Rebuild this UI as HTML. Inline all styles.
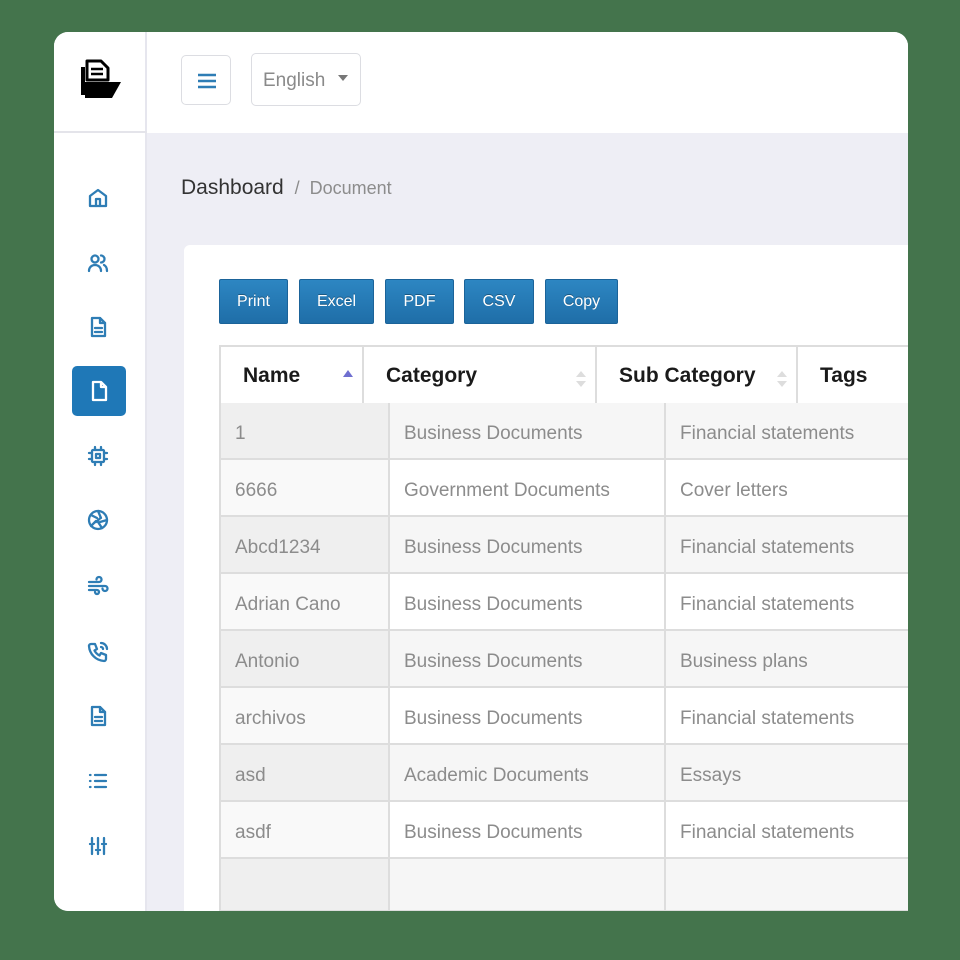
<!DOCTYPE html>
<html><head><meta charset="utf-8">
<style>
*{margin:0;padding:0;box-sizing:border-box}
body{width:960px;height:960px;background:#44744c;position:relative;overflow:hidden;font-family:"Liberation Sans",sans-serif}
.card{position:absolute;left:54px;top:32px;width:854px;height:879px;background:#eeeef5;border-radius:14px;overflow:hidden}
.side{position:absolute;left:0;top:0;width:93px;height:879px;background:#fff;border-right:2px solid #e6e6ee}
.logo{position:absolute;left:0;top:0;width:93px;height:101px;border-bottom:2px solid #e4e4ea}
.head{position:absolute;left:93px;top:0;right:0;height:101px;background:#fff}
.ic{position:absolute;left:32px;width:24px;height:24px}
.ic svg{width:24px;height:24px;fill:none;stroke:#2e7db5;stroke-width:2.3;stroke-linecap:round;stroke-linejoin:round}
.btnm{position:absolute;left:127px;top:23px;width:50px;height:50px;border:1px solid #dcdde2;border-radius:5px;background:#fff}
.lang{position:absolute;left:197px;top:21px;width:110px;height:53px;border:1px solid #dcdde2;border-radius:5px;background:#fff;color:#8a8a8a;font-size:19px;padding:16px 0 0 11px}
.lang:after{content:"";position:absolute;right:12px;top:21px;border-left:5px solid transparent;border-right:5px solid transparent;border-top:6px solid #777}
.bc{position:absolute;left:127px;top:144px;font-size:21px;color:#333}
.bc span{color:#8c8c8c;font-size:18px}
.panel{position:absolute;left:130px;top:213px;width:740px;height:700px;background:#fff;border-radius:6px}
.b{position:absolute;top:247px;height:45px;background:linear-gradient(#2d86c2,#1f6ea8);color:#fff;font-size:16px;text-align:center;line-height:43px;border-radius:2px;border:1px solid #1b6399;text-shadow:0 -1px 0 rgba(0,0,0,.3)}
.th{position:absolute;top:313px;height:61px;background:#fff;border:2px solid #ddd;font-weight:bold;font-size:21px;color:#1a1a1a;padding:17px 0 0 22px}
.cell{position:absolute;height:57px;border-left:2px solid #ddd;border-bottom:2px solid #ddd;font-size:19px;color:#8c8c8c;padding:20px 0 0 14px;white-space:nowrap;overflow:hidden}
.sort{position:absolute;top:22px;width:10px;height:20px}
</style></head><body>
<div class="card">
 <div class="side">
  <div class="logo">
   <svg style="position:absolute;left:24px;top:26px" width="44" height="42" viewBox="0 0 44 42">
    <path d="M3 9h4v28H3z" fill="#000"/>
    <path d="M9 3h14l7 7v12H9z" fill="#fff" stroke="#000" stroke-width="3" stroke-linejoin="round"/>
    <path d="M13 11h12M13 16h12" stroke="#000" stroke-width="2.5"/>
    <path d="M7 24h36l-9 16H7z" fill="#000"/>
   </svg>
  </div>
  <div class="ic" style="top:154px"><svg viewBox="0 0 24 24"><path d="M4 10l8-6 8 6v10H4z"/><path d="M10 20v-7h4v7"/></svg></div>
  <div class="ic" style="top:219px"><svg viewBox="0 0 24 24"><circle cx="9" cy="8" r="3.5"/><path d="M3 20c0-4 3-6 6-6s6 2 6 6"/><path d="M15 4.5a3.5 3.5 0 0 1 0 7M18 14c2 1 3 3 3 6"/></svg></div>
  <div class="ic" style="top:283px"><svg viewBox="0 0 24 24"><path d="M6 3h8l5 5v13H6z"/><path d="M14 3v5h5M9 13h7M9 17h7"/></svg></div>
  <div style="position:absolute;left:18px;top:334px;width:54px;height:50px;background:#1f78b7;border-radius:5px"><svg style="position:absolute;left:15px;top:13px" width="24" height="24" viewBox="0 0 24 24" fill="none" stroke="#fff" stroke-width="2.3" stroke-linejoin="round"><path d="M6 3h8l5 5v13H6z"/><path d="M14 3v5h5"/></svg></div>
  <div class="ic" style="top:412px"><svg viewBox="0 0 24 24"><rect x="6" y="6" width="12" height="12" rx="1"/><rect x="10" y="10" width="4" height="4"/><path d="M9 3v3M15 3v3M9 18v3M15 18v3M3 9h3M3 15h3M18 9h3M18 15h3"/></svg></div>
  <div class="ic" style="top:476px"><svg viewBox="0 0 24 24"><circle cx="12" cy="12" r="9"/><path d="M12 3l3 7M21 12l-7 2M16 20l-4-6M5 18l5-5M5 7l6 3M14.5 10L10 14"/></svg></div>
  <div class="ic" style="top:542px"><svg viewBox="0 0 24 24"><path d="M3 8h10a2.5 2.5 0 1 0-2.5-2.5M3 12h16a2.5 2.5 0 1 1-2.5 2.5M3 16h8a2 2 0 1 1-2 2"/></svg></div>
  <div class="ic" style="top:608px"><svg viewBox="0 0 24 24"><path d="M5 4h4l2 5-2.5 1.5a11 11 0 0 0 5 5L15 13l5 2v4a2 2 0 0 1-2 2A16 16 0 0 1 3 6a2 2 0 0 1 2-2"/><path d="M15 7a2 2 0 0 1 2 2M15 3a6 6 0 0 1 6 6"/></svg></div>
  <div class="ic" style="top:672px"><svg viewBox="0 0 24 24"><path d="M6 3h8l5 5v13H6z"/><path d="M14 3v5h5M9 13h7M9 17h7"/></svg></div>
  <div class="ic" style="top:737px"><svg viewBox="0 0 24 24"><path d="M9 6h11M9 12h11M9 18h11M4 6h.5M4 12h.5M4 18h.5"/></svg></div>
  <div class="ic" style="top:802px"><svg viewBox="0 0 24 24"><path d="M6 4v4M6 12v8M12 4v10M12 18v2M18 4v4M18 12v8M4 10h4M10 16h4M16 10h4"/></svg></div>
 </div>
 <div class="head">
  <div class="btnm" style="left:34px"><svg style="position:absolute;left:14px;top:16px" width="22" height="18" viewBox="0 0 22 18" stroke="#2e7db5" stroke-width="2.5"><path d="M2 3h18M2 9h18M2 15h18"/></svg></div>
  <div class="lang" style="left:104px">English</div>
 </div>
 <div class="bc">Dashboard <span>&nbsp;/&nbsp; Document</span></div>
 <div class="panel"></div>
 <div class="b" style="left:165px;width:69px">Print</div>
 <div class="b" style="left:245px;width:75px">Excel</div>
 <div class="b" style="left:331px;width:69px">PDF</div>
 <div class="b" style="left:410px;width:70px">CSV</div>
 <div class="b" style="left:491px;width:73px">Copy</div>

 <div class="th" style="left:165px;width:145px">Name<svg class="sort" style="left:122px" viewBox="0 0 10 20"><path d="M0 8l5-7 5 7z" fill="#6f6fd0"/></svg></div>
 <div class="th" style="left:308px;width:235px">Category<svg class="sort" style="left:212px" viewBox="0 0 10 20"><path d="M0 8l5-6 5 6zM0 12l5 6 5-6z" fill="#ddd"/></svg></div>
 <div class="th" style="left:541px;width:203px">Sub Category<svg class="sort" style="left:180px" viewBox="0 0 10 20"><path d="M0 8l5-6 5 6zM0 12l5 6 5-6z" fill="#ddd"/></svg></div>
 <div class="th" style="left:742px;width:120px;border-right:none">Tags</div>
</div>
<div style="position:absolute;left:219px;top:403px;width:690px;height:509px">
 <div class="cell" style="left:0;top:0;width:171px;background:#efefef">1</div><div class="cell" style="left:169px;top:0;width:278px;background:#f6f6f6">Business Documents</div><div class="cell" style="left:445px;top:0;width:245px;background:#f6f6f6">Financial statements</div>
 <div class="cell" style="left:0;top:57px;width:171px;background:#f9f9f9">6666</div><div class="cell" style="left:169px;top:57px;width:278px;background:#fff">Government Documents</div><div class="cell" style="left:445px;top:57px;width:245px;background:#fff">Cover letters</div>
 <div class="cell" style="left:0;top:114px;width:171px;background:#efefef">Abcd1234</div><div class="cell" style="left:169px;top:114px;width:278px;background:#f6f6f6">Business Documents</div><div class="cell" style="left:445px;top:114px;width:245px;background:#f6f6f6">Financial statements</div>
 <div class="cell" style="left:0;top:171px;width:171px;background:#f9f9f9">Adrian Cano</div><div class="cell" style="left:169px;top:171px;width:278px;background:#fff">Business Documents</div><div class="cell" style="left:445px;top:171px;width:245px;background:#fff">Financial statements</div>
 <div class="cell" style="left:0;top:228px;width:171px;background:#efefef">Antonio</div><div class="cell" style="left:169px;top:228px;width:278px;background:#f6f6f6">Business Documents</div><div class="cell" style="left:445px;top:228px;width:245px;background:#f6f6f6">Business plans</div>
 <div class="cell" style="left:0;top:285px;width:171px;background:#f9f9f9">archivos</div><div class="cell" style="left:169px;top:285px;width:278px;background:#fff">Business Documents</div><div class="cell" style="left:445px;top:285px;width:245px;background:#fff">Financial statements</div>
 <div class="cell" style="left:0;top:342px;width:171px;background:#efefef">asd</div><div class="cell" style="left:169px;top:342px;width:278px;background:#f6f6f6">Academic Documents</div><div class="cell" style="left:445px;top:342px;width:245px;background:#f6f6f6">Essays</div>
 <div class="cell" style="left:0;top:399px;width:171px;background:#f9f9f9">asdf</div><div class="cell" style="left:169px;top:399px;width:278px;background:#fff">Business Documents</div><div class="cell" style="left:445px;top:399px;width:245px;background:#fff">Financial statements</div>
 <div class="cell" style="left:0;top:456px;width:171px;height:53px;background:#efefef"></div><div class="cell" style="left:169px;top:456px;width:278px;height:53px;background:#f6f6f6"></div><div class="cell" style="left:445px;top:456px;width:245px;height:53px;background:#f6f6f6"></div>
</div>
<div style="position:absolute;left:908px;top:0;width:52px;height:960px;background:#44744c"></div>
<div style="position:absolute;left:0;top:911px;width:960px;height:49px;background:#44744c"></div>
</body></html>
